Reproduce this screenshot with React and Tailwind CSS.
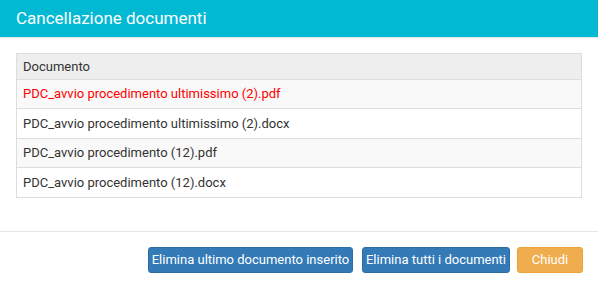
const files = [
  { name: 'PDC_avvio procedimento ultimissimo (2).pdf', latest: true },
  { name: 'PDC_avvio procedimento ultimissimo (2).docx' },
  { name: 'PDC_avvio procedimento (12).pdf' },
  { name: 'PDC_avvio procedimento (12).docx' },
];

export default function App() {
  return (
    <div className="w-[598px] h-[289px] bg-white font-['Roboto',sans-serif] text-[13px] text-[#333]">
      {/* Modal header */}
      <div className="h-[38px] bg-[#02b9d4] border-b border-[#e5e5e5] px-4 flex items-center">
        <h4 className="text-[17px] text-white leading-none">Cancellazione documenti</h4>
      </div>

      {/* Body */}
      <div className="px-4 pt-[15px] pb-[33px]">
        <table className="w-full border-collapse border border-[#ddd]">
          <thead>
            <tr className="bg-[#eee] h-[26px]">
              <th className="border border-[#ddd] px-[6px] text-left font-normal">Documento</th>
            </tr>
          </thead>
          <tbody>
            {files.map((f, i) => (
              <tr key={i} className={i % 2 === 0 ? 'bg-[#f9f9f9] h-[29px]' : 'bg-white h-[30px]'}>
                <td className={`border border-[#ddd] px-[6px] ${f.latest ? 'text-[#ff0000]' : ''}`}>{f.name}</td>
              </tr>
            ))}
          </tbody>
        </table>
      </div>

      {/* Footer */}
      <div className="border-t border-[#e5e5e5] px-[15px] pt-[15px] flex justify-end">
        <button className="h-[26px] w-[205px] bg-[#337ab7] border border-[#2e6da4] rounded-[3px] text-white">
          Elimina ultimo documento inserito
        </button>
        <button className="ml-[9px] h-[26px] w-[148px] bg-[#337ab7] border border-[#2e6da4] rounded-[3px] text-white">
          Elimina tutti i documenti
        </button>
        <button className="ml-[7px] h-[26px] w-[66px] bg-[#f0ad4e] border border-[#eea236] rounded-[3px] text-white">
          Chiudi
        </button>
      </div>
    </div>
  );
}
